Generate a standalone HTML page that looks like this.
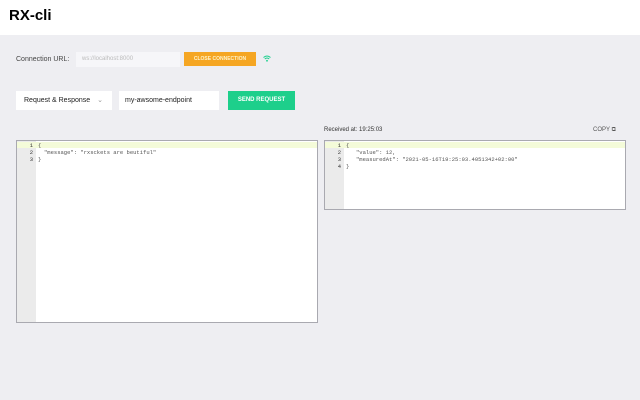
<!DOCTYPE html>
<html><head><style>
body{margin:0;width:640px;height:400px;background:#eeeef2;font-family:"Liberation Sans",sans-serif;position:relative;overflow:hidden}
.hdr{position:absolute;left:0;top:0;width:640px;height:35px;background:#fff}
.hdr b{position:absolute;left:9px;top:7px;font-size:15px}
.a{position:absolute}
.ed{position:absolute;background:#fff;border:1px solid #a9a9b0;font-family:"Liberation Mono",monospace;font-size:5.5px;color:#555}
.gut{position:absolute;left:0;top:0;bottom:0;width:19px;background:#ebebeb}
.hl{position:absolute;left:0;right:0;top:1px;height:6px;background:#f4fbd9}
.ln{position:absolute;left:0;width:16px;text-align:right;color:#333}
.tx{position:absolute}
</style></head><body>
<div class="hdr"><b>RX-cli</b></div>
<div class="a" style="left:16px;top:56px;font-size:7px;color:#444">Connection URL:</div>
<div class="a" style="left:76px;top:52px;width:104px;height:15px;background:#f6f6f9;font-size:6px;color:#bbb;line-height:15px;padding-left:6px;box-sizing:border-box">ws://localhost:8000</div>
<div class="a" style="left:184px;top:52px;width:72px;height:14px;background:#f5a623;font-size:5px;font-weight:bold;text-align:center;line-height:14px;color:#fff3c8">CLOSE CONNECTION</div>
<svg class="a" style="left:263px;top:55px" width="8" height="7" viewBox="0 0 8 7"><path d="M0.5 2.5Q4 -0.5 7.5 2.5M1.8 4Q4 2 6.2 4" stroke="#1ccf8e" stroke-width="1" fill="none"/><circle cx="4" cy="5.8" r="0.9" fill="#1ccf8e"/></svg>
<div class="a" style="left:16px;top:91px;width:96px;height:19px;background:#fff;font-size:7px;line-height:19px;padding-left:8px;box-sizing:border-box;color:#222">Request &amp; Response <span style="color:#999;margin-left:5px">&#8964;</span></div>
<div class="a" style="left:119px;top:91px;width:100px;height:19px;background:#fff;font-size:7px;line-height:19px;padding-left:6px;box-sizing:border-box;color:#222">my-awsome-endpoint</div>
<div class="a" style="left:228px;top:91px;width:67px;height:19px;background:#1dcf8b;color:#fff;font-size:6px;font-weight:bold;text-align:center;line-height:19px">SEND REQUEST</div>
<div class="a" style="left:324px;top:127px;font-size:6px;color:#333">Received at: 19:25:03</div>
<div class="a" style="left:593px;top:127px;font-size:6px;color:#555">COPY &#10697;</div>
<div class="ed" style="left:16px;top:140px;width:300px;height:181px">
<div class="gut"></div><div class="hl"></div>
<div class="ln" style="top:1px">1</div><div class="ln" style="top:8px">2</div><div class="ln" style="top:15px">3</div>
<div class="tx" style="left:21px;top:1px">{</div>
<div class="tx" style="left:27px;top:8px">"message": "rxsckets are beutiful"</div>
<div class="tx" style="left:21px;top:15px">}</div>
</div>
<div class="ed" style="left:324px;top:140px;width:300px;height:68px">
<div class="gut"></div><div class="hl"></div>
<div class="ln" style="top:1px">1</div><div class="ln" style="top:8px">2</div><div class="ln" style="top:15px">3</div><div class="ln" style="top:22px">4</div>
<div class="tx" style="left:21px;top:1px">{</div>
<div class="tx" style="left:31px;top:8px">"value": 12,</div>
<div class="tx" style="left:31px;top:15px">"measuredAt": "2021-05-16T19:25:03.4051342+02:00"</div>
<div class="tx" style="left:21px;top:22px">}</div>
</div>
</body></html>
